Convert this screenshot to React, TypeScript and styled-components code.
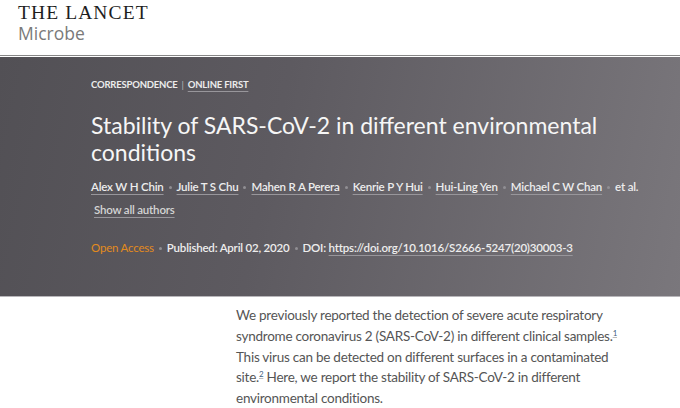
import React from "react";
import styled, { createGlobalStyle } from "styled-components";

const Global = createGlobalStyle`
  html, body { margin: 0; padding: 0; background: #fff; }
  body { font-family: Lato, "Open Sans", sans-serif; width: 680px; height: 408px; overflow: hidden; }
`;

const Page = styled.div`
  display: flex;
  flex-direction: column;
  width: 680px;
`;

const Header = styled.header`
  height: 56px;
  padding: 3px 0 0 18px;
  box-sizing: border-box;
  border-bottom: 1px solid #878787;
`;

const LogoTop = styled.div`
  font-family: "Liberation Serif", serif;
  font-size: 19.5px;
  line-height: 20px;
  color: #1e1e1e;
  letter-spacing: 1.1px;
`;

const LogoBottom = styled.div`
  font-family: "Open Sans", sans-serif;
  font-size: 17.5px;
  line-height: 20px;
  color: #7a7a7a;
`;

const Hero = styled.section`
  margin-top: 1px;
  height: 240px;
  background: linear-gradient(102deg, #525055 0%, #5d5a60 40%, #7a777c 100%);
  border-bottom: 1px solid #b8b6ba;
  padding: 22px 0 0 91px;
  box-sizing: border-box;
  display: flex;
  flex-direction: column;
`;

const Underlined = styled.span`
  text-decoration: underline;
  text-decoration-color: #98969b;
  text-decoration-thickness: 1px;
  text-underline-offset: 3px;
`;

const Kicker = styled.div`
  display: flex;
  align-items: baseline;
  gap: 4px;
  font-size: 9.5px;
  line-height: 12px;
  font-weight: 700;
  color: #ececec;
  letter-spacing: -0.2px;
`;

const Sep = styled.span`
  color: #b9b7bb;
  font-weight: 400;
`;

const Title = styled.h1`
  margin: 21px 0 0;
  font-size: 23px;
  line-height: 27px;
  font-weight: 400;
  color: #f6f6f6;
  width: 540px;
`;

const Row = styled.div<{ $top: number }>`
  margin-top: ${(p) => p.$top}px;
  display: flex;
  align-items: center;
  font-size: 11.5px;
  line-height: 16px;
  font-weight: 600;
  letter-spacing: -0.2px;
  color: #ededed;
  white-space: nowrap;
`;

const Dot = styled.span`
  flex: none;
  width: 3px;
  height: 3px;
  border-radius: 50%;
  background: #908e93;
  margin: 1px 5px 0;
`;

const ShowAll = styled(Underlined)`
  align-self: flex-start;
  margin: 7px 0 0 3px;
  font-size: 11.5px;
  line-height: 16px;
  font-weight: 600;
  letter-spacing: -0.2px;
  color: #d4d4d4;
`;

const Open = styled.span`
  color: #e38b1d;
  font-weight: 400;
`;

const Body = styled.p`
  margin: 8px 0 0 236px;
  width: 392px;
  font-size: 13.5px;
  letter-spacing: -0.25px;
  line-height: 20.8px;
  color: #555;
`;

const Ref = styled.sup`
  font-size: 8px;
  line-height: 8px;
  vertical-align: 5px;
  color: #3f5f7f;
  text-decoration: underline;
  text-decoration-color: #bbb;
`;

const authors = [
  "Alex W H Chin",
  "Julie T S Chu",
  "Mahen R A Perera",
  "Kenrie P Y Hui",
  "Hui-Ling Yen",
  "Michael C W Chan",
];

export default function App() {
  return (
    <Page>
      <Global />
      <Header>
        <LogoTop>THE LANCET</LogoTop>
        <LogoBottom>Microbe</LogoBottom>
      </Header>
      <Hero>
        <Kicker>
          <span>CORRESPONDENCE</span>
          <Sep>|</Sep>
          <Underlined>ONLINE FIRST</Underlined>
        </Kicker>
        <Title>Stability of SARS-CoV-2 in different environmental conditions</Title>
        <Row $top={13}>
          {authors.map((a) => (
            <React.Fragment key={a}>
              <Underlined>{a}</Underlined>
              <Dot />
            </React.Fragment>
          ))}
          <span>et al.</span>
        </Row>
        <ShowAll>Show all authors</ShowAll>
        <Row $top={22}>
          <Open>Open Access</Open>
          <Dot />
          <span>Published: April 02, 2020</span>
          <Dot />
          <span>DOI:&nbsp;</span>
          <Underlined>https://doi.org/10.1016/S2666-5247(20)30003-3</Underlined>
        </Row>
      </Hero>
      <Body>
        We previously reported the detection of severe acute respiratory syndrome coronavirus 2
        (SARS-CoV-2) in different clinical samples.<Ref>1</Ref> This virus can be detected on
        different surfaces in a contaminated site.<Ref>2</Ref> Here, we report the stability of
        SARS-CoV-2 in different environmental conditions.
      </Body>
    </Page>
  );
}
